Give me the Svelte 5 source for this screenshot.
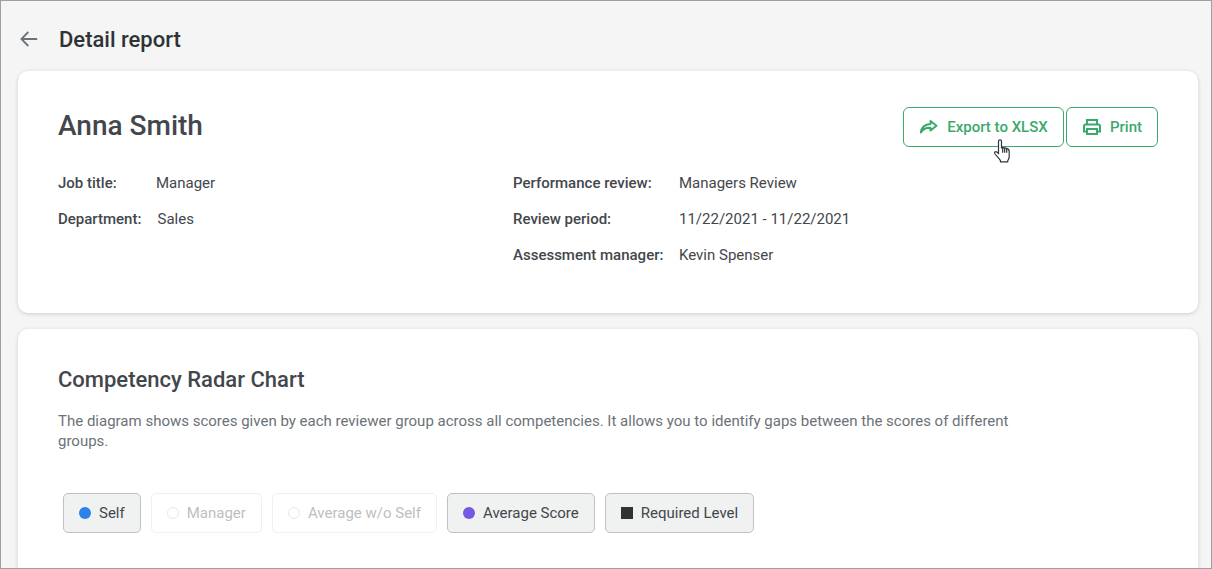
<script>
	const legend = [
		{ label: 'Self', kind: 'dot', color: '#2b83ea', on: true },
		{ label: 'Manager', kind: 'ring', on: false },
		{ label: 'Average w/o Self', kind: 'ring', on: false },
		{ label: 'Average Score', kind: 'dot', color: '#7559e0', on: true },
		{ label: 'Required Level', kind: 'square', color: '#2f3336', on: true }
	];
</script>

<div class="page">
	<header class="top">
		<svg class="back" width="20" height="20" viewBox="0 0 20 20" fill="none" stroke="#6c7278" stroke-width="1.8">
			<path d="M18.2 10H2.5M9.3 3 2.4 10l6.9 7" />
		</svg>
		<h1>Detail report</h1>
	</header>

	<section class="card info">
		<div class="name-row">
			<h2>Anna Smith</h2>
			<div class="actions">
				<button class="export">
					<svg width="19" height="16" viewBox="0 0 19 16" fill="none" stroke="#3ca96c" stroke-width="2" stroke-linejoin="round">
						<path d="M11.500 2 17.500 6.800 11.500 11.500V8.700C7.500 8.500 4 10 1.800 13.500 2.500 8.500 6 5.200 11.500 4.900z" />
					</svg>
					Export to XLSX
				</button>
				<button class="print">
					<svg width="18" height="16" viewBox="0 0 18 16" fill="none" stroke="#3ca96c" stroke-width="2">
						<path d="M4 5.500V1h10v4.500M4 12.500H1V7a1.500 1.500 0 0 1 1.500-1.500h13A1.500 1.500 0 0 1 17 7v5.500h-3" />
						<path d="M4 10h10v5H4z" />
					</svg>
					Print
				</button>
				<svg class="cursor" width="18" height="25" viewBox="0 0 18 25" fill="#fff" stroke="#2f3440" stroke-width="1.200">
					<path d="M5.500 2.200c0-1.700 3-1.700 3 0v6.600l1.200-.2 2 .3 2 .5c1.500.4 2.500 1.200 2.500 3v5c0 2.200-.9 3.200-1.500 4.500v1H7.500v-1.200C6.500 19.500 4 17.500 2 15c-1.200-1.600.3-3 1.800-2l1.700 1.500z" />
					<path d="M9.700 8.800v5M11.700 9.100v4.700M13.700 9.600v4.200" />
				</svg>
			</div>
		</div>

		<div class="details">
			<div class="col left">
				<p class="job"><b>Job title:</b><span>Manager</span></p>
				<p class="dept"><b>Department:</b><span>Sales</span></p>
			</div>
			<div class="col right">
				<p><b>Performance review:</b><span>Managers Review</span></p>
				<p><b>Review period:</b><span>11/22/2021 - 11/22/2021</span></p>
				<p><b>Assessment manager:</b><span>Kevin Spenser</span></p>
			</div>
		</div>
	</section>

	<section class="card chart">
		<h3>Competency Radar Chart</h3>
		<p class="desc">
			The diagram shows scores given by each reviewer group across all competencies. It allows you to identify gaps between the scores of different groups.
		</p>
		<div class="legend">
			{#each legend as item}
				<div class="chip" class:off={!item.on}>
					{#if item.kind === 'ring'}
						<i class="ring"></i>
					{:else}
						<i class={item.kind} style="background: {item.color}"></i>
					{/if}
					{item.label}
				</div>
			{/each}
		</div>
	</section>
</div>

<style>
	:global(body) {
		margin: 0;
	}

	.page {
		box-sizing: border-box;
		height: 569px;
		overflow: hidden;
		display: flex;
		flex-direction: column;
		gap: 16px;
		padding: 0 13px 0 17px;
		background: #f5f5f5;
		border: 1px solid #a0a0a0;
		font-family: Roboto, sans-serif;
		color: #43474c;
	}

	.top {
		height: 70px;
		margin-bottom: -16px;
		flex: none;
		display: flex;
		align-items: center;
		gap: 20px;
		padding: 6px 0 0 1px;
		box-sizing: border-box;
	}

	h1 {
		margin: 0;
		font-size: 22px;
		font-weight: 500;
		color: #2f3336;
	}

	.card {
		flex: none;
		background: #fff;
		border-radius: 10px;
		box-shadow: 0 1px 4px rgb(0 0 0 / 0.16);
		padding: 0 40px;
	}

	.info {
		height: 242px;
		box-sizing: border-box;
		padding-top: 36px;
	}

	.name-row {
		display: flex;
		justify-content: space-between;
		height: 40px;
	}

	h2 {
		margin: 0;
		padding-top: 1px;
		font-size: 28px;
		font-weight: 500;
		line-height: 36px;
	}

	.actions {
		position: relative;
		display: flex;
		gap: 2px;
		height: 40px;
	}

	button {
		display: flex;
		align-items: center;
		justify-content: center;
		gap: 9px;
		height: 40px;
		box-sizing: border-box;
		background: #fff;
		border: 1px solid #3ca96c;
		border-radius: 6px;
		font: 500 15px Roboto, sans-serif;
		color: #3ca96c;
		padding: 0;
	}

	.export {
		width: 161px;
	}

	.print {
		width: 92px;
	}

	.print svg {
		margin-left: 1px;
	}

	.cursor {
		position: absolute;
		left: 90px;
		top: 32px;
	}

	.details {
		display: flex;
		margin-top: 26px;
		font-size: 15px;
	}

	.col {
		display: flex;
		flex-direction: column;
		gap: 16px;
	}

	.left {
		width: 455px;
	}

	.details p {
		margin: 0;
		height: 20px;
		line-height: 20px;
		display: flex;
	}

	.details b {
		font-weight: 500;
	}

	.job b {
		width: 98px;
	}

	.dept b {
		width: 99.500px;
	}

	.right b {
		width: 166px;
	}

	h3 {
		margin: 0;
		padding-top: 37px;
		font-size: 22px;
		font-weight: 500;
		line-height: 28px;
	}

	.chart {
		flex: 1;
		min-height: 300px;
	}

	.desc {
		margin: 17px 0 0;
		max-width: 960px;
		font-size: 15px;
		line-height: 20px;
		color: #6c7278;
	}

	.legend {
		display: flex;
		gap: 10px;
		margin: 42px 0 0 5px;
	}

	.chip {
		display: flex;
		align-items: center;
		gap: 8px;
		height: 40px;
		box-sizing: border-box;
		padding: 0 15px;
		background: #f0f2f2;
		border: 1px solid #bfc1c2;
		border-radius: 5px;
		font-size: 15px;
		color: #43474c;
	}

	.chip.off {
		background: #fff;
		border-color: #f0f0f0;
		color: #bcbfc1;
	}

	.chip i {
		display: block;
		width: 12px;
		height: 12px;
		border-radius: 50%;
		box-sizing: border-box;
	}

	.chip .ring {
		border: 1px solid #e6e8e8;
	}

	.chip .square {
		border-radius: 0;
	}
</style>
